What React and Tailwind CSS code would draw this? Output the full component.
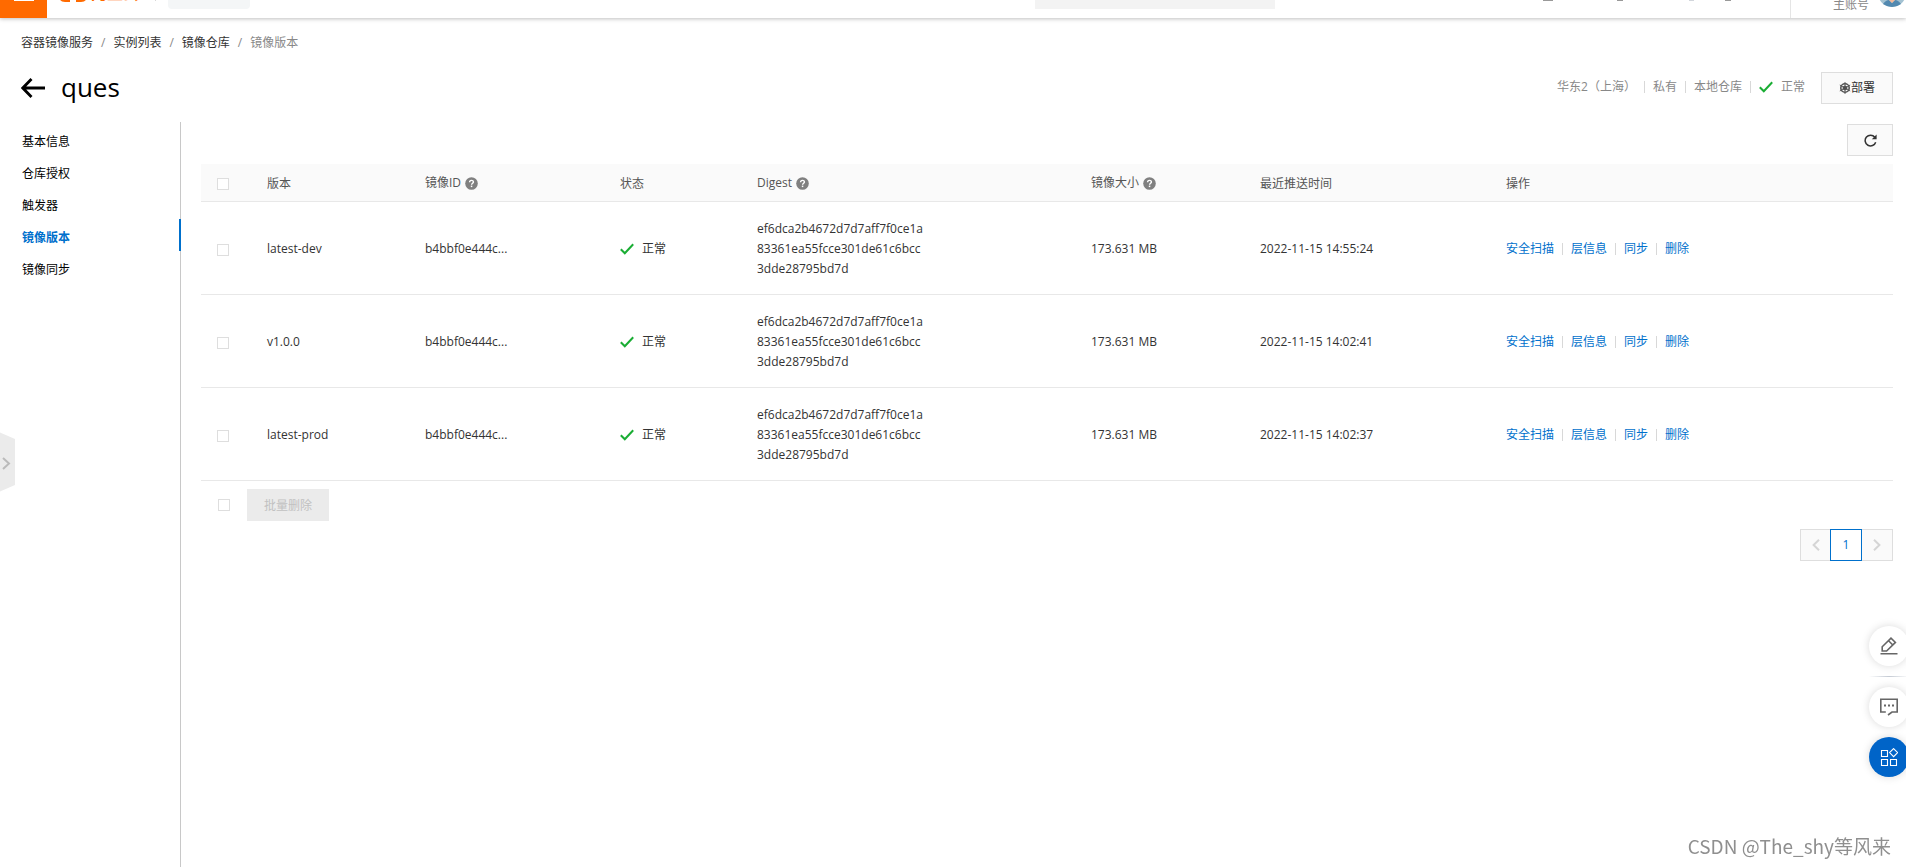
import React from "react";

const rows = [
  { tag: "latest-dev", time: "2022-11-15 14:55:24" },
  { tag: "v1.0.0", time: "2022-11-15 14:02:41" },
  { tag: "latest-prod", time: "2022-11-15 14:02:37" },
];
const digest = "ef6dca2b4672d7d7aff7f0ce1a83361ea55fcce301de61c6bcc3dde28795bd7d";
const navItems = ["基本信息", "仓库授权", "触发器", "镜像版本", "镜像同步"];
const actions = ["安全扫描", "层信息", "同步", "删除"];

function Check() {
  return (
    <svg width="14" height="12" viewBox="0 0 14 12" fill="none" className="shrink-0" aria-hidden="true">
      <path d="M0.8 6.2 L4.8 10.2 L13.2 1.2" stroke="#1aad34" strokeWidth="2" />
    </svg>
  );
}

function Help() {
  return (
    <svg width="13" height="13" viewBox="0 0 13 13" className="shrink-0" aria-hidden="true">
      <circle cx="6.5" cy="6.5" r="6.3" fill="#808080" />
      <path d="M4.6 5.2 C4.6 2.8 8.4 2.8 8.4 5 C8.4 6.3 6.6 6.3 6.6 7.8" fill="none" stroke="#fff" strokeWidth="1.4" />
      <rect x="5.8" y="8.6" width="1.5" height="1.5" fill="#fff" />
    </svg>
  );
}

function Box({ label }) {
  return (
    <input
      type="checkbox"
      aria-label={label}
      className="block size-3 appearance-none border border-[#dedede] bg-white checked:bg-[#0070cc]"
    />
  );
}

function Divider() {
  return <span className="mx-2 h-3 w-px bg-[#d8d8d8]" />;
}

function Header() {
  return (
    <header className="relative z-10 h-[18px] overflow-hidden">
      <div className="-mt-8 flex h-[50px] items-center">
        <button type="button" aria-label="菜单" className="flex h-full w-[47px] items-center justify-center bg-[#ff6a00] pl-px">
          <svg width="20" height="16" viewBox="0 0 20 16" fill="#fff" aria-hidden="true">
            <path d="M0 0h20v2H0zM0 7h20v2H0zM0 14h20v2H0z" />
          </svg>
        </button>
        <a href="#" className="ml-3 flex items-center gap-1 text-base font-black text-[#ff6a00]">
          <svg width="28" height="18" viewBox="0 0 28 18" fill="none" stroke="#ff6a00" strokeWidth="3" aria-hidden="true">
            <path d="M11 1.5H6Q1.5 1.5 1.5 6V12Q1.5 16.5 6 16.5H11M17 1.5H22Q26.5 1.5 26.5 6V12Q26.5 16.5 22 16.5H17M9 9H19" />
          </svg>
          阿里云
        </a>
        <span className="ml-4 h-4 w-px bg-[#d8d8d8]" />
        <span className="ml-3 h-8 w-[82px] rounded-sm bg-[#f4f6f7]" />
        <div className="flex-1" />
        <input type="search" aria-label="搜索" className="mr-[268px] h-8 w-60 bg-[#f3f3f3]" />
        <svg width="188" height="16" viewBox="0 0 188 16" className="mr-[59px]" aria-hidden="true">
          <path d="M0 14h10v2H0zM74 14h6v2h-6zM182 14h6v2h-6z" fill="#999" />
          <path d="M146 14h5v2h-5z" fill="#d2d6dc" />
        </svg>
        <div className="flex h-full w-[116px] items-center justify-end border-l border-[#e5e5e5]">
          <span className="mt-6 mr-[9px] text-xs text-[#888]">主账号</span>
          <svg width="28" height="28" viewBox="0 0 28 28" aria-hidden="true">
            <circle cx="14" cy="14" r="14" fill="#a3c2d2" />
            <path d="M5 25Q8 21 11 21L14 24L17 21Q20 21 23 25Q14 31 5 25z" fill="#5289b0" />
            <path d="M11 16h6v5l-3 3-3-3z" fill="#f2b899" />
            <circle cx="14" cy="12" r="6" fill="#f2b899" />
          </svg>
        </div>
      </div>
    </header>
  );
}

function Sidebar() {
  return (
    <nav className="w-[181px] shrink-0 border-r border-[#c8c8c8] pt-px">
      {navItems.map((item) => (
        <a
          key={item}
          href="#"
          className={
            item === "镜像版本"
              ? "-mr-px flex h-8 items-center border-r-2 border-[#0070cc] pt-[6px] pl-[22px] font-bold text-[#0070cc]"
              : "flex h-8 items-center pt-[6px] pl-[22px] text-black"
          }
        >
          {item}
        </a>
      ))}
    </nav>
  );
}

function VersionTable() {
  return (
    <table className="mt-2 w-full table-fixed border-collapse text-left">
      <colgroup>
        <col className="w-[50px]" />
        <col className="w-[158px]" />
        <col className="w-[195px]" />
        <col className="w-[137px]" />
        <col className="w-[334px]" />
        <col className="w-[169px]" />
        <col className="w-[246px]" />
        <col />
      </colgroup>
      <thead>
        <tr className="h-[37px] border-b border-[#e8e8e8] bg-[#fafafa] text-[#555]">
          <th className="pt-1 pl-4"><Box label="全选" /></th>
          <th className="px-4 pt-1 font-normal">版本</th>
          <th className="px-4 pt-[2px] font-normal"><span className="flex items-center gap-1">镜像ID <Help /></span></th>
          <th className="px-4 pt-1 font-normal">状态</th>
          <th className="px-4 pt-[2px] font-normal"><span className="flex items-center gap-1">Digest <Help /></span></th>
          <th className="px-4 pt-[2px] font-normal"><span className="flex items-center gap-1">镜像大小 <Help /></span></th>
          <th className="px-4 pt-1 font-normal">最近推送时间</th>
          <th className="px-4 pt-1 font-normal">操作</th>
        </tr>
      </thead>
      <tbody>
        {rows.map((row) => (
          <tr key={row.tag} className="border-b border-[#e8e8e8]">
            <td className="pt-1 pl-4"><Box label={row.tag} /></td>
            <td className="px-4 pt-[2px]">{row.tag}</td>
            <td className="px-4 pt-[2px]">b4bbf0e444c...</td>
            <td className="px-4 pt-[2px]"><span className="flex items-center gap-2"><Check />正常</span></td>
            <td className="px-4 pt-[17px] pb-[15px]"><div className="w-[168px] break-all">{digest}</div></td>
            <td className="px-4 pt-[2px]">173.631 MB</td>
            <td className="px-4 pt-[2px]">{row.time}</td>
            <td className="px-4 pt-[2px]">
              <div className="flex items-center">
                {actions.map((a, i) => (
                  <React.Fragment key={a}>
                    {i > 0 && <Divider />}
                    <a href="#" className="text-[#0070cc]">{a}</a>
                  </React.Fragment>
                ))}
              </div>
            </td>
          </tr>
        ))}
      </tbody>
    </table>
  );
}

function FloatingTools() {
  return (
    <div className="fixed -right-[3px] bottom-[90px] flex flex-col items-center">
      <button type="button" aria-label="编辑" className="flex size-10 items-center justify-center rounded-full bg-white shadow-[0_0_8px_rgba(0,0,0,0.15)]">
        <svg width="18" height="18" viewBox="0 0 18 18" fill="none" stroke="#666" strokeWidth="1.6" aria-hidden="true">
          <path d="M2.2 14V9.8L11 1.2L15.4 5.4L6.6 14zM8.6 3.8L12.8 8M0.5 16.8H17.5" />
        </svg>
      </button>
      <span className="my-[10px] h-px w-10 bg-linear-to-r from-white via-[#c4cad3] to-white" />
      <button type="button" aria-label="咨询" className="flex size-10 items-center justify-center rounded-full bg-white shadow-[0_0_8px_rgba(0,0,0,0.15)]">
        <svg width="18" height="18" viewBox="0 0 18 18" fill="none" stroke="#666" strokeWidth="1.6" aria-hidden="true">
          <path d="M5.8 14H0.8V1.2H17.2V14H12L8 17" />
          <path d="M4 6.6h2v2H4zM8 6.6h2v2H8zM12 6.6h2v2h-2z" fill="#666" stroke="none" />
        </svg>
      </button>
      <button type="button" aria-label="应用" className="mt-[10px] flex size-10 items-center justify-center rounded-full bg-[#0064c8] shadow-[0_0_8px_rgba(0,0,0,0.15)]">
        <svg width="18" height="18" viewBox="0 0 18 18" fill="none" stroke="#fff" strokeWidth="1.1" aria-hidden="true">
          <path d="M1.5 2.5h6v6h-6zM1.5 11.5h6v6h-6zM10.5 11.5h6v6h-6zM13.6 0.6L17.6 4.6L13.6 8.6L9.6 4.6z" />
        </svg>
      </button>
    </div>
  );
}

export default function App() {
  return (
    <div className="flex min-h-screen flex-col overflow-x-hidden bg-white font-['Open_Sans','Noto_Sans_CJK_SC',sans-serif] text-xs leading-5 text-[#333]">
      <div className="relative z-10 shadow-[0_1px_4px_rgba(0,0,0,0.25)]">
        <Header />
      </div>

      <nav className="mt-[15px] flex h-5 items-center pl-[21px]" aria-label="breadcrumb">
        {["容器镜像服务", "实例列表", "镜像仓库"].map((t) => (
          <React.Fragment key={t}>
            <a href="#">{t}</a>
            <span className="mx-2 text-[#888]">/</span>
          </React.Fragment>
        ))}
        <span className="text-[#888]">镜像版本</span>
      </nav>

      <div className="mt-[19px] flex h-8 items-center pr-[13px] pl-[21px]">
        <a href="#" aria-label="返回">
          <svg width="24" height="20" viewBox="0 0 24 20" fill="none" stroke="#000" strokeWidth="2.8" aria-hidden="true">
            <path d="M10.5 1L1.8 10L10.5 19M2 10H24" />
          </svg>
        </a>
        <h1 className="ml-4 flex-1 pb-[2px] text-[26px] font-medium text-black">ques</h1>
        <div className="flex items-center pb-[2px] text-[#888]">
          <span>华东2（上海）</span>
          <Divider />
          <span>私有</span>
          <Divider />
          <span>本地仓库</span>
          <Divider />
          <Check />
          <span className="ml-2">正常</span>
        </div>
        <button type="button" className="ml-4 flex h-8 w-[72px] items-center justify-center border border-[#dedede] bg-[#fafafa]">
          <svg width="12" height="12" viewBox="0 0 12 12" fill="none" stroke="#555" aria-hidden="true">
            <circle cx="6" cy="6" r="4.2" strokeWidth="1.6" />
            <circle cx="6" cy="6" r="2" fill="#333" />
            <path d="M6 0v12M0.8 3L11.2 9M0.8 9L11.2 3" strokeWidth="0.9" />
          </svg>
          部署
        </button>
      </div>

      <div className="mt-[18px] flex flex-1">
        <Sidebar />
        <main className="min-w-0 flex-1 pt-[2px] pr-[13px] pl-5">
          <div className="flex justify-end">
            <button type="button" aria-label="刷新" className="flex h-8 w-[46px] items-center justify-center border border-[#dedede] bg-[#fafafa]">
              <svg width="13" height="13" viewBox="0 0 13 13" fill="none" aria-hidden="true">
                <path d="M10.8 3.2A5.4 5.4 0 1 0 11.7 8.2" stroke="#333" strokeWidth="1.5" />
                <path d="M12.6 0.4V5.2H7.8z" fill="#333" />
              </svg>
            </button>
          </div>
          <VersionTable />
          <div className="mt-2 flex items-center pl-[17px]">
            <Box label="选择全部" />
            <button type="button" disabled className="ml-[17px] h-8 w-[82px] bg-[#ebebeb] pt-[2px] text-[#c1c1c1]">批量删除</button>
          </div>
          <div className="mt-2 flex justify-end">
            <button type="button" disabled aria-label="上一页" className="flex h-8 w-[31px] items-center justify-center border border-[#dedede] bg-[#fafafa]">
              <svg width="8" height="12" viewBox="0 0 8 12" fill="none" stroke="#d5d5d5" strokeWidth="2" aria-hidden="true"><path d="M7 0.8L1.6 6L7 11.2" /></svg>
            </button>
            <button type="button" aria-current="page" className="relative -ml-px h-8 w-8 border border-[#0070cc] bg-white text-[#0070cc]">1</button>
            <button type="button" disabled aria-label="下一页" className="-ml-px flex h-8 w-8 items-center justify-center border border-[#dedede] bg-[#fafafa]">
              <svg width="8" height="12" viewBox="0 0 8 12" fill="none" stroke="#d5d5d5" strokeWidth="2" aria-hidden="true"><path d="M1 0.8L6.4 6L1 11.2" /></svg>
            </button>
          </div>
        </main>
      </div>

      <button type="button" aria-label="展开侧栏" className="fixed top-[432px] left-0">
        <svg width="15" height="60" viewBox="0 0 15 60" fill="none" aria-hidden="true">
          <path d="M0 0.5L15 7V53L0 59.5z" fill="#ebebeb" />
          <path d="M3 26L9 31.5L3 37" stroke="#bbb" strokeWidth="2" />
        </svg>
      </button>
      <FloatingTools />
      <p className="fixed right-[15px] bottom-[9px] font-['Noto_Sans_CJK_SC',sans-serif] text-[19px] leading-6 text-[#8f8f8f]">
        CSDN @The_shy等风来
      </p>
    </div>
  );
}
